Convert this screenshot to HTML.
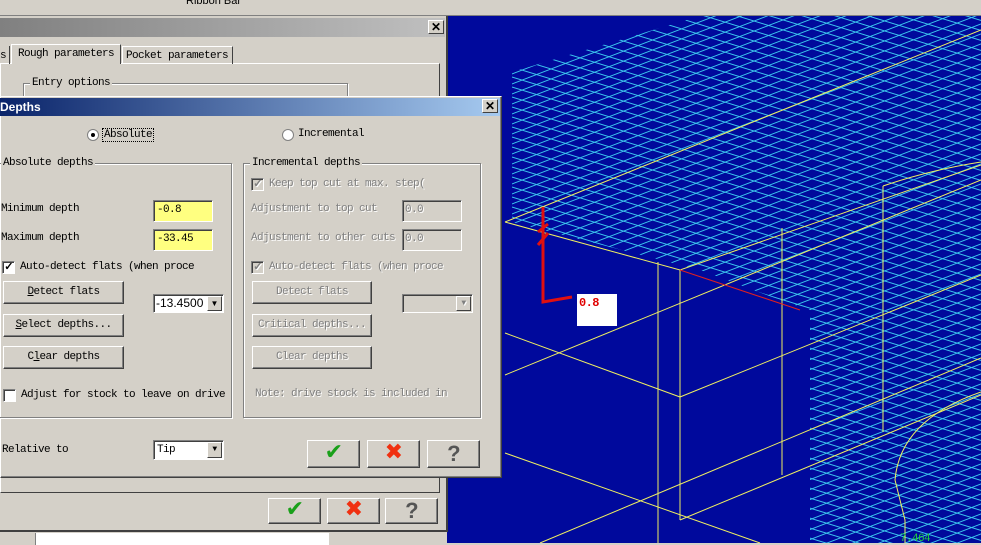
<!DOCTYPE html>
<html><head><meta charset="utf-8"><style>
*{box-sizing:border-box}
body{margin:0;width:981px;height:543px;overflow:hidden;position:relative;background:#d4d0c8;font-family:"Liberation Mono","Noto Sans CJK SC",monospace;font-size:11px;letter-spacing:-0.6px;color:#000;white-space:nowrap}
.a{position:absolute}
.btn{position:absolute;background:#d4d0c8;border:1px solid;border-color:#fff #404040 #404040 #fff;box-shadow:inset -1px -1px 0 #808080;text-align:center;line-height:20px}
.sunk{position:absolute;border:1px solid;border-color:#808080 #fff #fff #808080;box-shadow:inset 1px 1px 0 #404040}
.grp{position:absolute;border:1px solid #808080;box-shadow:1px 1px 0 #fff,inset 1px 1px 0 #fff}
.gl{position:absolute;background:#d4d0c8;padding:0 2px;top:-8px;left:6px;line-height:14px}
.dis{color:#808080;text-shadow:1px 1px 0 #fff}
.x{position:absolute;width:16px;height:14px;background:#d4d0c8;border:1px solid;border-color:#fff #404040 #404040 #fff;font:bold 12px "Liberation Sans";text-align:center;line-height:12px;letter-spacing:0}
.cb{position:absolute;width:13px;height:13px;background:#fff;border:1px solid;border-color:#808080 #fff #fff #808080;box-shadow:inset 1px 1px 0 #404040;font:bold 11px "Liberation Sans";line-height:11px;text-align:center}
.dd{position:absolute;right:1px;top:1px;width:15px;bottom:1px;background:#d4d0c8;border:1px solid;border-color:#fff #404040 #404040 #fff;font-size:8px;text-align:center;line-height:13px}
</style></head><body>
<div class="a" style="left:0;top:0;width:981px;height:16px;background:#d4d0c8;border-bottom:1px solid #808080"></div>
<div class="a" style="left:186px;top:-5px;font:11px 'Liberation Sans';letter-spacing:0">Ribbon Bar</div>
<svg class="a" style="left:447px;top:16px" width="534" height="527" viewBox="447 16 534 527">
<defs>
<pattern id="p1" width="200" height="10" patternUnits="userSpaceOnUse" patternTransform="skewY(-21)"><line x1="0" y1="0.5" x2="200" y2="0.5" stroke="#3cc8ee" stroke-width="1"/></pattern>
<pattern id="p2" width="200" height="10" patternUnits="userSpaceOnUse" patternTransform="skewY(17)"><line x1="0" y1="0.5" x2="200" y2="0.5" stroke="#3cc8ee" stroke-width="1"/></pattern>
</defs>
<rect x="447" y="16" width="534" height="527" fill="#00099c"/>
<polygon points="512,72 700,16 981,16 981,543 810,543 810,310 780,300 700,270 512,222" fill="url(#p1)"/>
<polygon points="512,72 700,16 981,16 981,543 810,543 810,310 780,300 700,270 512,222" fill="url(#p2)"/>
<g stroke="#f0f060" stroke-width="1" fill="none">
<polyline points="505,222 680,270 981,165"/>
<line x1="505" y1="222" x2="981" y2="30"/>
<line x1="680" y1="270" x2="680" y2="520"/>
<line x1="658" y1="262" x2="658" y2="543"/>
<line x1="782" y1="228" x2="782" y2="475"/>
<line x1="883" y1="186" x2="883" y2="432"/>
<line x1="505" y1="333" x2="680" y2="397"/>
<line x1="505" y1="375" x2="981" y2="180"/>
<line x1="680" y1="397" x2="981" y2="275"/>
<line x1="505" y1="453" x2="760" y2="543"/>
<line x1="540" y1="543" x2="981" y2="358"/>
<line x1="680" y1="520" x2="981" y2="395"/>
<path d="M981,162 Q930,170 883,186"/>
<path d="M981,392 Q900,420 895,480 L905,520 L905,543"/>
</g>
<line x1="680" y1="270" x2="800" y2="310" stroke="#e02020"/>
<g stroke="#e01010" stroke-width="3" fill="none"><polyline points="543,207 543,302 572,297"/><path d="M538,232 l10,-8 M538,245 l10,-12"/></g>
<rect x="577" y="294" width="40" height="32" fill="#fff"/>
<text x="579" y="306" fill="#e00000" font-family="Liberation Mono" font-weight="bold" font-size="12">0.8</text>
<text x="900" y="541" fill="#20d040" font-family="Liberation Mono" font-size="11">7.464</text>
</svg>
<div class="a" style="left:0;top:16px;width:448px;height:516px;background:#d4d0c8;border-right:2px solid #404040;border-bottom:2px solid #404040"></div>
<div class="a" style="left:0;top:18px;width:445px;height:19px;background:linear-gradient(90deg,#808080,#c0c0c0)"></div>
<div class="x" style="left:428px;top:20px">✕</div>
<div class="a" style="left:0;top:63px;width:440px;height:430px;border:1px solid;border-color:#fff #404040 #404040 #fff"></div>
<div class="a" style="left:0;top:46px;width:10px;height:18px;border-right:1px solid #404040;padding-top:4px">s</div>
<div class="a" style="left:11px;top:44px;width:110px;height:20px;border:1px solid;border-bottom:none;border-color:#fff #404040 #404040 #fff;background:#d4d0c8;padding:3px 0 0 6px">Rough parameters</div>
<div class="a" style="left:122px;top:46px;width:111px;height:18px;border:1px solid;border-bottom:none;border-color:#fff #404040 #404040 #fff;padding:3px 0 0 3px">Pocket parameters</div>
<div class="grp" style="left:23px;top:83px;width:325px;height:30px"><span class="gl">Entry options</span></div>
<div class="btn" style="left:268px;top:498px;width:53px;height:26px;color:#1aa01a;font-size:22px;line-height:24px">✔</div>
<div class="btn" style="left:327px;top:498px;width:53px;height:26px;color:#f03010;font-size:22px;line-height:24px">✖</div>
<div class="btn" style="left:385px;top:498px;width:53px;height:26px;color:#555;font:bold 22px 'Liberation Sans';line-height:24px">?</div>
<div class="a" style="left:35px;top:533px;width:294px;height:12px;background:#fff;border-left:1px solid #808080"></div>
<div class="a" style="left:0;top:96px;width:502px;height:382px;background:#d4d0c8;border:1px solid;border-color:#fff #404040 #404040 #fff;box-shadow:inset -1px -1px 0 #808080"></div>
<div class="a" style="left:0;top:98px;width:500px;height:18px;background:linear-gradient(90deg,#0a246a,#a6caf0);color:#fff;font:bold 12px 'Liberation Sans';line-height:18px;letter-spacing:0">Depths</div>
<div class="x" style="left:482px;top:99px">✕</div>
<div class="a" style="left:87px;top:129px;width:12px;height:12px;border-radius:50%;background:#fff;border:1px solid #808080"><div class="a" style="left:3px;top:3px;width:4px;height:4px;background:#000;border-radius:50%"></div></div>
<div class="a" style="left:102px;top:128px;border:1px dotted #000;padding:0 1px">Absolute</div>
<div class="a" style="left:282px;top:129px;width:12px;height:12px;border-radius:50%;background:#fff;border:1px solid #808080"></div>
<div class="a" style="left:298px;top:128px">Incremental</div>
<div class="grp" style="left:-2px;top:163px;width:234px;height:255px"><span class="gl" style="left:2px">Absolute depths</span></div>
<div class="grp" style="left:243px;top:163px;width:238px;height:255px"><span class="gl">Incremental depths</span></div>
<div class="a" style="left:1px;top:203px">Minimum depth</div>
<div class="a" style="left:1px;top:232px">Maximum depth</div>
<div class="sunk" style="left:153px;top:200px;width:60px;height:22px;background:#ffff80;padding:3px 3px">-0.8</div>
<div class="sunk" style="left:153px;top:229px;width:60px;height:22px;background:#ffff80;padding:3px 3px">-33.45</div>
<div class="cb" style="left:2px;top:261px">✓</div>
<div class="a" style="left:20px;top:261px">Auto-detect flats (when proce</div>
<div class="btn" style="left:3px;top:281px;width:121px;height:23px"><u>D</u>etect flats</div>
<div class="btn" style="left:3px;top:314px;width:121px;height:23px"><u>S</u>elect depths...</div>
<div class="btn" style="left:3px;top:346px;width:121px;height:23px">C<u>l</u>ear depths</div>
<div class="sunk" style="left:153px;top:294px;width:71px;height:19px;background:#fff;padding:1px 2px;font:12px 'Liberation Sans';letter-spacing:0">-13.4500<div class="dd">▼</div></div>
<div class="cb" style="left:3px;top:389px"></div>
<div class="a" style="left:21px;top:389px">Adjust for stock to leave on drive</div>
<div class="cb dis" style="left:251px;top:178px;background:#d4d0c8">✓</div>
<div class="a dis" style="left:269px;top:178px">Keep top cut at max. step(</div>
<div class="a dis" style="left:251px;top:203px">Adjustment to top cut</div>
<div class="a dis" style="left:251px;top:232px">Adjustment to other cuts</div>
<div class="sunk dis" style="left:402px;top:200px;width:60px;height:22px;padding:3px 2px">0.0</div>
<div class="sunk dis" style="left:402px;top:229px;width:60px;height:22px;padding:3px 2px">0.0</div>
<div class="cb dis" style="left:251px;top:261px;background:#d4d0c8">✓</div>
<div class="a dis" style="left:269px;top:261px">Auto-detect flats (when proce</div>
<div class="btn dis" style="left:252px;top:281px;width:120px;height:23px">Detect flats</div>
<div class="btn dis" style="left:252px;top:314px;width:120px;height:23px">Critical depths...</div>
<div class="btn dis" style="left:252px;top:346px;width:120px;height:23px">Clear depths</div>
<div class="sunk" style="left:402px;top:294px;width:71px;height:19px"><div class="dd dis">▼</div></div>
<div class="a dis" style="left:255px;top:388px">Note:  drive stock is included in</div>
<div class="a" style="left:2px;top:444px">Relative to</div>
<div class="sunk" style="left:153px;top:440px;width:71px;height:20px;background:#fff;padding:3px 3px">Tip<div class="dd">▼</div></div>
<div class="btn" style="left:307px;top:440px;width:53px;height:28px;color:#1aa01a;font-size:22px;line-height:26px">✔</div>
<div class="btn" style="left:367px;top:440px;width:53px;height:28px;color:#f03010;font-size:22px;line-height:26px">✖</div>
<div class="btn" style="left:427px;top:440px;width:53px;height:28px;color:#555;font:bold 22px 'Liberation Sans';line-height:26px">?</div>
</body></html>
